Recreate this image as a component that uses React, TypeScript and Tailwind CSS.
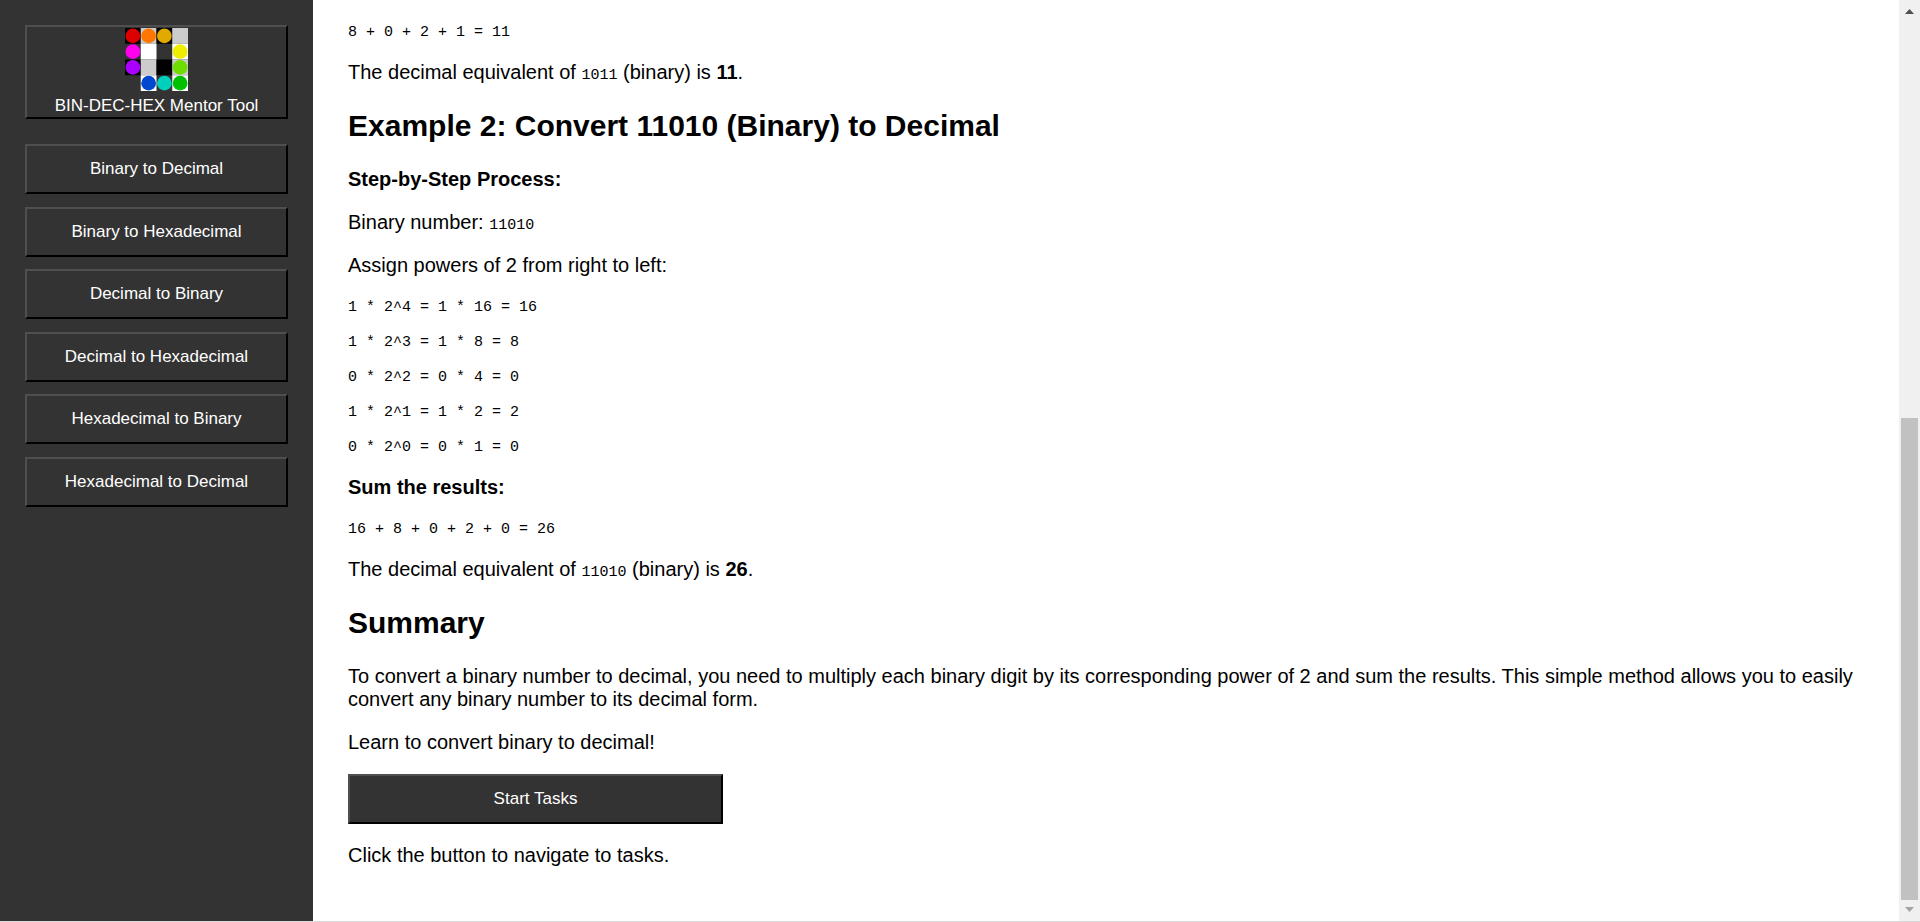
import type { ReactNode } from "react";

const tools = [
  "Binary to Decimal",
  "Binary to Hexadecimal",
  "Decimal to Binary",
  "Decimal to Hexadecimal",
  "Hexadecimal to Binary",
  "Hexadecimal to Decimal",
];

const powers = [
  "1 * 2^4 = 1 * 16 = 16",
  "1 * 2^3 = 1 * 8 = 8",
  "0 * 2^2 = 0 * 4 = 0",
  "1 * 2^1 = 1 * 2 = 2",
  "0 * 2^0 = 0 * 1 = 0",
];

// Each cell: [background, dot]
const cells: [string | null, string | null][] = [
  ["#000", "#dd0000"], ["#ccc", "#ff7700"], ["#000", "#e2aa00"], ["#ccc", null],
  [null, "#ff00ee"], ["#fff", null], [null, null], ["#fff", "#eeee00"],
  ["#000", "#aa00ff"], ["#ccc", null], ["#000", null], ["#ccc", "#70dd00"],
  [null, null], ["#fff", "#0048d0"], [null, "#00d0bb"], ["#fff", "#00c000"],
];

const bevel =
  "border-2 border-t-[#4f4f4f] border-l-[#4f4f4f] border-r-black border-b-black bg-[#333] text-[17px] leading-5 text-white";

function Logo() {
  return (
    <svg viewBox="0 0 64 64" className="h-[63px] w-[63px]" aria-hidden="true">
      {cells.map(([bg, dot], i) => {
        const x = (i % 4) * 16;
        const y = Math.floor(i / 4) * 16;
        return (
          <g key={i}>
            {bg && <rect x={x} y={y} width="16" height="16" fill={bg} />}
            {dot && <circle cx={x + 8} cy={y + 8} r="7.5" fill={dot} />}
          </g>
        );
      })}
    </svg>
  );
}

function Code({ children }: { children: ReactNode }) {
  return (
    <code className="font-['Liberation_Mono',monospace] text-[15px] leading-none">{children}</code>
  );
}

function CodeLine({ children }: { children: ReactNode }) {
  return (
    <p className="pt-[3px] font-['Liberation_Mono',monospace] text-[15px] leading-4">{children}</p>
  );
}

function ScrollTrack() {
  return (
    <div className="flex w-[21px] shrink-0 flex-col items-center bg-[#f0f0f0]" aria-hidden="true">
      <svg viewBox="0 0 21 21" className="h-[21px] w-[21px]">
        <path d="M6 14 L10.500 9 L15 14 Z" fill="#505050" />
      </svg>
      <div className="grow-[397]" />
      <div className="w-[17px] grow-[483] bg-[#c1c1c1]" />
      <svg viewBox="0 0 21 21" className="h-[21px] w-[21px]">
        <path d="M6 7 L10.500 12 L15 7 Z" fill="#a3a3a3" />
      </svg>
    </div>
  );
}

export default function App() {
  return (
    <div className="flex min-h-screen border-b border-[#d9d9d9] bg-white font-['Liberation_Sans',Arial,sans-serif] text-xl leading-[23px] text-black">
      <nav className="flex w-[313px] shrink-0 flex-col gap-[25px] bg-[#333] p-[25px]">
        <button type="button" className={`flex h-[94px] flex-col items-center justify-center gap-[5px] ${bevel}`}>
          <Logo />
          <span>BIN-DEC-HEX Mentor Tool</span>
        </button>
        <div className="flex h-[363px] flex-col justify-between">
          {tools.map((tool) => (
            <button key={tool} type="button" className={`h-[50px] ${bevel}`}>
              {tool}
            </button>
          ))}
        </div>
      </nav>

      <main className="flex min-w-0 flex-1 flex-col gap-5 px-[35px] pt-[22px] pb-[50px]">
        <CodeLine>8 + 0 + 2 + 1 = 11</CodeLine>
        <p>
          The decimal equivalent of <Code>1011</Code> (binary) is <strong>11</strong>.
        </p>
        <h2 className="my-[5px] text-[30px] leading-[34px] font-bold">
          Example 2: Convert 11010 (Binary) to Decimal
        </h2>
        <p className="font-bold">Step-by-Step Process:</p>
        <p>
          Binary number: <Code>11010</Code>
        </p>
        <p>Assign powers of 2 from right to left:</p>
        <div className="flex flex-col gap-4">
          {powers.map((line) => (
            <CodeLine key={line}>{line}</CodeLine>
          ))}
        </div>
        <p className="font-bold">Sum the results:</p>
        <CodeLine>16 + 8 + 0 + 2 + 0 = 26</CodeLine>
        <p>
          The decimal equivalent of <Code>11010</Code> (binary) is <strong>26</strong>.
        </p>
        <h2 className="my-[5px] text-[30px] leading-[34px] font-bold">Summary</h2>
        <p>
          To convert a binary number to decimal, you need to multiply each binary digit by its
          corresponding power of 2 and sum the results. This simple method allows you to easily
          convert any binary number to its decimal form.
        </p>
        <p>Learn to convert binary to decimal!</p>
        <button type="button" className={`h-[50px] w-[375px] ${bevel}`}>
          Start Tasks
        </button>
        <p>Click the button to navigate to tasks.</p>
      </main>

      <ScrollTrack />
    </div>
  );
}
